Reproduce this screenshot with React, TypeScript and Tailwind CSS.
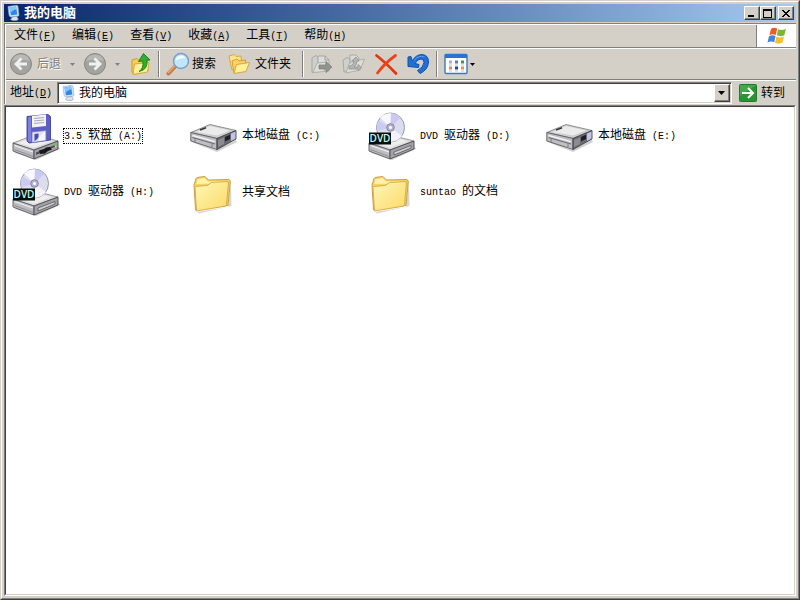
import { useState } from "react";
import type { ReactNode } from "react";

type IconKind = "floppy" | "disk" | "dvd" | "folder";

const menus = [
  { text: "文件", accessKey: "F" },
  { text: "编辑", accessKey: "E" },
  { text: "查看", accessKey: "V" },
  { text: "收藏", accessKey: "A" },
  { text: "工具", accessKey: "T" },
  { text: "帮助", accessKey: "H" },
];

const items: { name: string; icon: IconKind }[] = [
  { name: "3.5 软盘 (A:)", icon: "floppy" },
  { name: "本地磁盘 (C:)", icon: "disk" },
  { name: "DVD 驱动器 (D:)", icon: "dvd" },
  { name: "本地磁盘 (E:)", icon: "disk" },
  { name: "DVD 驱动器 (H:)", icon: "dvd" },
  { name: "共享文档", icon: "folder" },
  { name: "suntao 的文档", icon: "folder" },
];

// Latin runs use a half-width face, Chinese runs the full-width one
function Mixed({ text }: { text: string }) {
  const parts = text.split(/([\u4e00-\u9fff]+)/).filter(Boolean);
  return (
    <>
      {parts.map((part, i) =>
        /[\u4e00-\u9fff]/.test(part) ? (
          <span key={i}>{part}</span>
        ) : (
          <span key={i} className="font-['Liberation_Mono',monospace] text-[10px]">
            {part}
          </span>
        )
      )}
    </>
  );
}

function AccessKey({ letter }: { letter: string }) {
  return (
    <span className="font-['Liberation_Mono',monospace] text-[10px]">
      (<span className="underline underline-offset-1">{letter}</span>)
    </span>
  );
}

function ComputerIcon() {
  return (
    <svg width="16" height="16" viewBox="0 0 16 16" aria-hidden="true">
      <path d="M2 1.500 L10.500 .3 Q11.500 .3 12 1.500 L13 10 Q13 11 12 11.300 L5 12 Q3.500 12 3 10 Z" fill="#cfe3f6" stroke="#8ba9d0" strokeWidth=".6" />
      <path d="M3.500 2.500 L10 1.500 L11.300 9.500 L5 10.300 Z" fill="#2f86e8" />
      <path d="M3.500 2.500 L10 1.500 L10.400 4.500 Q7 4.500 4.500 8 Z" fill="#7fc6ff" />
      <path d="M6.500 12 L10.500 11.500 L12 13.500 Q13 15 10 15.500 Q6 16 4.500 14.500 Z" fill="#dbe3ee" stroke="#8996ab" strokeWidth=".6" />
    </svg>
  );
}

function WindowsFlag() {
  return (
    <svg width="20" height="20" viewBox="0 0 20 20" aria-hidden="true">
      <path d="M4 3 Q7 .8 10.200 2.800 L8.800 9 Q5.500 7.400 2.400 9.200 Z" fill="#ee5a2a" />
      <path d="M11.200 3.200 Q14.500 5 19 2.800 L17.300 9.200 Q13.500 11 9.800 9.300 Z" fill="#7cb82f" />
      <path d="M2 10.300 Q5.500 8.500 8.600 10.100 L7.200 16.200 Q4 14.600 .5 16.400 Z" fill="#3f86dc" />
      <path d="M9.500 10.500 Q13 12.300 17 10.400 L15.500 16.600 Q12 18.800 8 16.700 Z" fill="#f8bf2c" />
    </svg>
  );
}

function RoundArrow({ flip }: { flip?: boolean }) {
  return (
    <svg width="24" height="24" viewBox="0 0 24 24" className={flip ? "-scale-x-100" : ""} aria-hidden="true">
      <circle cx="12" cy="12" r="10.500" fill="#a3a3a1" stroke="#868684" />
      <path d="M3 9 A9.500 9.500 0 0 1 21 9 Q12 6 3 9 Z" fill="#b8b8b6" />
      <path d="M12.500 6.500 L7 12 L12.500 17.500 M7.500 12 H18" fill="none" stroke="#f0f0ee" strokeWidth="2.800" />
    </svg>
  );
}

function UpFolderIcon() {
  return (
    <svg width="22" height="24" viewBox="0 0 22 24" aria-hidden="true">
      <path d="M2 8 L7 6.500 L9 8.500 L17 8 L18 19 L4 22.500 L2 20 Z" fill="#f3cf55" stroke="#d19a26" />
      <path d="M4.500 12 L19 10.500 L17.500 20 L3 22.500 Z" fill="#fff09a" stroke="#dcaa34" />
      <path d="M9 19.500 Q14 16.500 12.800 9 L8.500 9.500 L13.500 1.500 L20 8 L16.800 8.300 Q18.500 17.500 9 19.500 Z" fill="#2fae2f" stroke="#137a18" strokeWidth=".9" />
    </svg>
  );
}

function SearchIcon() {
  return (
    <svg width="24" height="24" viewBox="0 0 24 24" aria-hidden="true">
      <path d="M9.500 14 L2.500 21.500" stroke="#c07a45" strokeWidth="4" strokeLinecap="round" />
      <path d="M9 13.500 L2.500 20.500" stroke="#efa96b" strokeWidth="1.600" strokeLinecap="round" />
      <circle cx="15" cy="9" r="7.500" fill="#bfe6fb" stroke="#7a9ecb" strokeWidth="1.500" />
      <path d="M9.500 9 Q10 4 15.500 3.500 Q19 4 19 6 Q13 6 9.500 9 Z" fill="#f4fcff" />
    </svg>
  );
}

function FoldersIcon() {
  return (
    <svg width="24" height="24" viewBox="0 0 24 24" aria-hidden="true">
      <path d="M2 4 L7 2.500 L9 4.500 L14 4 L15 14 L5 18 Z" fill="#fde48a" stroke="#dfa43c" />
      <path d="M5 9 L10 7 L12 9 L18.500 8 L19 19 L7 21 Z" fill="#f9d465" stroke="#d79c33" />
      <path d="M9.500 12.500 L22.500 10.500 L19 19.500 L7 21.500 Z" fill="#fff09c" stroke="#dda63a" />
    </svg>
  );
}

function MoveToIcon() {
  return (
    <svg width="24" height="24" viewBox="0 0 24 24" aria-hidden="true">
      <path d="M2 6 L6 3.500 L8 5 L8 20 L2 20.500 Z" fill="#cfcfcc" stroke="#a8a8a5" />
      <path d="M8 4 H15 L19 8 V19 H8 Z" fill="#dcdcda" stroke="#a8a8a5" />
      <path d="M15 4 V8 H19" fill="none" stroke="#a0a09e" />
      <path d="M3 20.500 L7 11 L16 10 L14 19.500 Z" fill="#dededb" stroke="#b0b0ad" />
      <path d="M9 13 H16 V9.500 L22 15 L16 20.500 V17 H9 Z" fill="#92928f" stroke="#7f7f7c" strokeWidth=".7" />
    </svg>
  );
}

function CopyToIcon() {
  return (
    <svg width="24" height="24" viewBox="0 0 24 24" aria-hidden="true">
      <path d="M1 8 L5 5.500 L8 7 V19 L2 20 Z" fill="#cfcfcc" stroke="#a8a8a5" />
      <path d="M8 3 H14 L17 6 V16 H8 Z" fill="#dcdcda" stroke="#a8a8a5" />
      <path d="M10 10 L22.500 7 L18 18 L4 21 L7 12 Z" fill="#dededb" stroke="#b0b0ad" />
      <path d="M7 14 Q11 14 12 9 L9.500 9 L14 5 L17 9 H15 Q15 13 12 15 L16 15 V12.500 L19.500 15.500 L16 18.500 V17 H7 Z" fill="#b4b4b1" stroke="#8c8c89" strokeWidth=".7" />
    </svg>
  );
}

function DeleteIcon() {
  return (
    <svg width="24" height="24" viewBox="0 0 24 24" aria-hidden="true">
      <path d="M2.500 3.500 Q11 10 22 21.500" fill="none" stroke="#e0370f" strokeWidth="2.800" strokeLinecap="round" />
      <path d="M21.500 3.500 Q11 11 3.500 21" fill="none" stroke="#ea441a" strokeWidth="2.800" strokeLinecap="round" />
    </svg>
  );
}

function UndoIcon() {
  return (
    <svg width="24" height="24" viewBox="0 0 24 24" aria-hidden="true">
      <path
        d="M2 5 L5 4.500 L6 9 Q10 2.500 16 2.500 Q22.500 3 22.500 10 Q22 18 14 21.500 L11.500 18.500 Q17.500 15.500 18 10.500 Q18 7 15 7 Q11.500 7 9 11.500 L13 12.500 L12.500 15.500 L2 14.500 Z"
        fill="#1f6fd8"
        stroke="#1450a8"
      />
      <path d="M8 8.500 Q13 2.500 18.500 5" fill="none" stroke="#5aa0ee" />
    </svg>
  );
}

function ViewsIcon() {
  return (
    <svg width="24" height="22" viewBox="0 0 24 22" aria-hidden="true">
      <rect x="1" y="1.500" width="22" height="19" rx="1" fill="#fff" stroke="#3a78c8" strokeWidth="1.400" />
      <path d="M1 1 H23 V5 H1 Z" fill="#2d72d2" />
      <path d="M5 7.500 h3 v3 h-3 Z" fill="#9fb1d3" />
      <path d="M11 7.500 h3 v3 h-3 Z" fill="#4c82cb" />
      <path d="M17 7.500 h3 v3 h-3 Z" fill="#31a13b" />
      <path d="M5 13.500 h3 v3 h-3 Z" fill="#e28a54" />
      <path d="M11 13.500 h3 v3 h-3 Z" fill="#174a9c" />
      <path d="M17 13.500 h3 v3 h-3 Z" fill="#e09a3c" />
      <path d="M5 12 h3 M11 12 h3 M17 12 h3 M5 18 h3 M11 18 h3 M17 18 h3" stroke="#b8c6dc" />
    </svg>
  );
}

function GoIcon() {
  return (
    <svg width="18" height="18" viewBox="0 0 18 18" aria-hidden="true">
      <rect x=".5" y=".5" width="17" height="17" rx="1" fill="#2a9434" stroke="#1f7a2b" />
      <path d="M1 1 H17 L1 12 Z" fill="#45a84d" />
      <path d="M9 4 L14 9 L9 14 M13 9 H3" fill="none" stroke="#fff" strokeWidth="2" />
    </svg>
  );
}

function Caret({ muted }: { muted?: boolean }) {
  return (
    <svg width="5" height="3" viewBox="0 0 5 3" aria-hidden="true">
      <path d="M0 0 H5 L2.500 3 Z" fill={muted ? "#808080" : "#000"} />
    </svg>
  );
}

// Grey case shared by the floppy and the DVD drives
function DriveCase() {
  return (
    <>
      <path d="M2 38 L22 47 L47 35 L48 37 L24 48 L3 41 Z" fill="#b0b0b0" opacity=".6" />
      <path d="M1 31 L22 23 L46 29 L22 38 Z" fill="#dcdcde" stroke="#88888c" strokeWidth=".8" />
      <path d="M6 31 L22 25 L40 29 L22 35.500 Z" fill="#eeeeef" />
      <path d="M1 31 L22 38 V47 L1 39 Z" fill="#bdbdc1" stroke="#5c5c60" strokeWidth=".9" />
      <path d="M22 38 L46 29 V37 L22 47 Z" fill="#a2a2a7" stroke="#48484c" strokeWidth=".9" />
      <path d="M2.500 33.500 L21 40" stroke="#f0f0f2" strokeWidth="1.300" />
      <path d="M2.500 37.500 L21 44.500" stroke="#8e8e93" />
    </>
  );
}

function FloppyDriveIcon() {
  return (
    <svg width="48" height="48" viewBox="0 0 48 48" aria-hidden="true">
      <DriveCase />
      <path d="M25 42 L44 34" stroke="#d8d8dc" strokeWidth="1.500" />
      <path d="M24 40.500 L43 33 V35 L24 43 Z" fill="#4a4a4e" />
      <path d="M27 38.500 L32 37 L34 35.500 L38 35 L40 37.500 L36 39 L33 41.500 L28 42 Z" fill="#18181a" />
      <circle cx="43" cy="32.500" r="1.200" fill="#6acb4a" />
      <path d="M15 4.500 L36 2.500 L38.500 4.500 V28 L17 31 L15 29 Z" fill="#5c60c6" stroke="#3e429a" strokeWidth=".9" />
      <path d="M16 5.500 L19 5 V29.500 L17 30 L16 29 Z" fill="#7d81dc" />
      <path d="M20 4 L34 2.600 V14 L20 15.500 Z" fill="#f3f3f7" />
      <path d="M22 6.500 L32 5.500 M22 9 L32 8 M22 11.500 L32 10.500" stroke="#a5a5b6" />
      <path d="M20 20 L34 18.500 V28.500 L20 30.500 Z" fill="#dfe1f5" stroke="#7378c5" strokeWidth=".7" />
      <path d="M22.500 22 L26.500 21.500 V28.500 L22.500 29 Z" fill="#484da8" />
      <path d="M22.500 29.500 L33 19 V28 Z" fill="#fff" opacity=".75" />
    </svg>
  );
}

function HardDiskIcon() {
  return (
    <svg width="48" height="48" viewBox="0 0 48 48" aria-hidden="true">
      <path d="M2 29 L26 38 L46 28 L47 30 L27 40 L4 31 Z" fill="#b0b0b0" opacity=".6" />
      <path d="M.8 20.500 L20 12.500 L46 18.500 L27 26.500 Z" fill="#cdcdcf" stroke="#7b7b7e" strokeWidth=".8" />
      <path d="M6 20 L20 14 L40 18.500 L27 23.500 Z" fill="#ebebec" />
      <path d="M.8 20.500 L27 26.500 V37.500 L.8 29 Z" fill="#bfbfc3" stroke="#5b5b5f" strokeWidth=".9" />
      <path d="M27 26.500 L46 18.500 V27 L27 37.500 Z" fill="#6a6a70" stroke="#414146" strokeWidth=".9" />
      <path d="M2.500 25.500 L25 32" stroke="#6f6f74" strokeWidth="1.300" />
      <path d="M2.500 23.500 L25 29.700" stroke="#f5f5f6" strokeWidth="1.300" />
      <path d="M5 26 V30 M22 31 V35" stroke="#7c7c80" />
      <path d="M28 28 L34 25.500 V32 L28 35 Z" fill="#8b8b90" />
      <path d="M35 25 L40 22.800 V27 L35 29.500 Z" fill="#1e1e28" />
      <path d="M41 21.500 L45.500 19.500 V26.500 L41 29 Z" fill="#c3c3ea" />
      <path d="M10 18 L16 15.800" stroke="#333" strokeWidth="1.600" />
    </svg>
  );
}

function DvdDriveIcon() {
  return (
    <svg width="48" height="48" viewBox="0 0 48 48" aria-hidden="true">
      <DriveCase />
      <path d="M26 40 L43 33.500 V36 L26 43 Z" fill="#d2d2d6" stroke="#56565a" strokeWidth=".8" />
      <ellipse cx="22.500" cy="15.500" rx="14" ry="14.500" fill="#dcdcef" stroke="#8e8ea8" strokeWidth=".9" />
      <path d="M22.500 15.500 L12 5.500 Q17 1 23 1.300 Z" fill="#f8f8ff" />
      <path d="M22.500 15.500 L23 1.300 Q29 1.500 32.500 5.500 Z" fill="#c9c8ee" />
      <path d="M22.500 15.500 L9.500 19 Q8 13 10 8.500 Z" fill="#cbcaf0" />
      <path d="M22.500 15.500 L34 24 Q29 30 23 29.700 Z" fill="#f4f3fb" />
      <circle cx="22.500" cy="15.500" r="3.800" fill="#b5b2cf" stroke="#8582a8" />
      <circle cx="22.500" cy="15.500" r="1.500" fill="#fff" />
      <rect x="1" y="20.500" width="22" height="12" fill="#04100f" />
      <text x="12" y="30" textAnchor="middle" fill="#c9f7f5" fontSize="10" fontWeight="600" fontFamily="Open Sans, sans-serif">
        DVD
      </text>
    </svg>
  );
}

function FolderIcon() {
  return (
    <svg width="48" height="48" viewBox="0 0 48 48" aria-hidden="true">
      <path d="M7 44 L38 39 L41 15 L41.500 38 L9 45.500 Z" fill="#bbb" opacity=".6" />
      <path d="M5.500 42 L4 17 L6 10.500 Q6.500 9.500 8 9.300 L15 8.500 L18.500 12 L38 11.500 Q40.500 11.500 40.300 14 L38 37.500 Z" fill="#f4d468" stroke="#c4973a" strokeWidth=".9" />
      <path d="M6.500 16 L7.500 11.300 L14.500 10 L18 13.500 L37 13 L38 15 Z" fill="#fff3ae" />
      <path d="M5 19.500 Q5 18.500 7 18.300 L17 17.500 L21.500 14.500 L37 13.500 Q38.500 13.500 38.500 15 L36.500 36.500 Q36.300 37.800 35 38.200 L6.500 43 Z" fill="url(#folderFront)" stroke="#d3a843" strokeWidth=".9" />
      <defs>
        <linearGradient id="folderFront" x1="0" y1="0" x2="1" y2="1">
          <stop offset="0" stopColor="#fff7ba" />
          <stop offset="1" stopColor="#fcd964" />
        </linearGradient>
      </defs>
    </svg>
  );
}

function ItemIcon({ kind }: { kind: IconKind }) {
  if (kind === "floppy") return <FloppyDriveIcon />;
  if (kind === "disk") return <HardDiskIcon />;
  if (kind === "dvd") return <DvdDriveIcon />;
  return <FolderIcon />;
}

const raised =
  "flex items-center justify-center bg-[#d4d0c8] border border-t-white border-l-white border-r-[#404040] border-b-[#404040] shadow-[inset_-1px_-1px_0_#808080]";

function CaptionButton({ label, children }: { label: string; children: ReactNode }) {
  return (
    <button type="button" aria-label={label} className={`${raised} w-4 h-[14px]`}>
      <svg width="10" height="9" viewBox="0 0 10 9" aria-hidden="true" shapeRendering="crispEdges">
        {children}
      </svg>
    </button>
  );
}

function ToolButton({ label, children, className = "" }: { label: string; children: ReactNode; className?: string }) {
  return (
    <button type="button" aria-label={label} className={`flex items-center shrink-0 ${className}`}>
      {children}
    </button>
  );
}

function Separator() {
  return <div className="w-[2px] h-[26px] shrink-0 border-l border-l-[#808080] border-r border-r-white" />;
}

export default function App() {
  const [address, setAddress] = useState("我的电脑");
  const [selected, setSelected] = useState("3.5 软盘 (A:)");

  return (
    <div className="min-h-screen flex flex-col bg-[#d4d0c8] border border-t-[#d4d0c8] border-l-[#d4d0c8] border-r-[#404040] border-b-[#404040] font-['Liberation_Sans','Noto_Sans_CJK_SC',sans-serif] text-[12px] leading-4 text-black">
      <div className="grow flex flex-col p-[2px] border border-t-white border-l-white border-r-[#808080] border-b-[#808080]">
        <header className="h-[18px] flex items-center pl-[2px] pr-[2px] bg-linear-to-r from-[#0a246a] to-[#a6caf0]">
          <ComputerIcon />
          <h1 className="ml-[2px] grow text-[13px] font-bold text-white">我的电脑</h1>
          <CaptionButton label="最小化">
            <path d="M1 6 h6 v2 h-6 Z" />
          </CaptionButton>
          <CaptionButton label="最大化">
            <path d="M0 0 h9 v9 h-9 Z M1 2 v6 h7 v-6 Z" fillRule="evenodd" />
          </CaptionButton>
          <div className="w-[2px]" />
          <CaptionButton label="关闭">
            <path d="M1 1h2v1h1v1h2v-1h1v-1h2v1h-1v1h-1v1h-1v1h1v1h1v1h1v1h-2v-1h-1v-1h-2v1h-1v1h-2v-1h1v-1h1v-1h1v-1h-1v-1h-1v-1h-1Z" />
          </CaptionButton>
        </header>

        <div className="mt-px border-t border-l border-[#808080]">
          <div className="border-l border-t border-white">
            <nav className="h-[23px] flex items-stretch border-b border-b-[#808080]">
              <div className="flex items-center grow pl-2 gap-4">
                {menus.map((menu) => (
                  <button key={menu.accessKey} type="button" className="whitespace-nowrap">
                    {menu.text}
                    <AccessKey letter={menu.accessKey} />
                  </button>
                ))}
              </div>
              <div className="w-10 flex items-center justify-center bg-white border-l border-l-[#808080]">
                <WindowsFlag />
              </div>
            </nav>

            <div className="h-8 flex items-center pl-[3px] border-t border-t-white border-b border-b-[#808080]">
              <ToolButton label="后退" className="text-[#808080] w-[60px] gap-1">
                <RoundArrow />
                <span className="whitespace-nowrap [text-shadow:1px_1px_0_#fff]">后退</span>
              </ToolButton>
              <ToolButton label="后退列表" className="px-[1px]">
                <Caret muted />
              </ToolButton>
              <ToolButton label="前进" className="ml-[7px]">
                <RoundArrow flip />
              </ToolButton>
              <ToolButton label="前进列表" className="ml-2">
                <Caret muted />
              </ToolButton>
              <ToolButton label="向上" className="ml-[10px] mr-[6px]">
                <UpFolderIcon />
              </ToolButton>
              <Separator />
              <ToolButton label="搜索" className="ml-[6px] gap-[2px]">
                <SearchIcon />
                <span className="whitespace-nowrap">搜索</span>
              </ToolButton>
              <ToolButton label="文件夹" className="ml-[11px] mr-[11px] gap-1">
                <FoldersIcon />
                <span className="whitespace-nowrap">文件夹</span>
              </ToolButton>
              <Separator />
              <div className="flex items-center gap-2 ml-[6px] mr-[6px]">
                <ToolButton label="移至">
                  <MoveToIcon />
                </ToolButton>
                <ToolButton label="复制到">
                  <CopyToIcon />
                </ToolButton>
                <ToolButton label="删除">
                  <DeleteIcon />
                </ToolButton>
                <ToolButton label="撤消">
                  <UndoIcon />
                </ToolButton>
              </div>
              <Separator />
              <ToolButton label="查看" className="ml-[6px] gap-[2px]">
                <ViewsIcon />
                <Caret />
              </ToolButton>
            </div>

            <form className="h-6 flex items-center pl-1 border-t border-t-white" onSubmit={(e) => e.preventDefault()}>
              <label htmlFor="address" className="whitespace-nowrap">
                地址
                <AccessKey letter="D" />
              </label>
              <div className="ml-[5px] grow h-[22px] flex items-center bg-white border border-t-[#808080] border-l-[#808080] border-r-white border-b-white shadow-[inset_1px_1px_0_#404040,inset_-1px_-1px_0_#d4d0c8] pl-[3px] pr-[1px]">
                <ComputerIcon />
                <input
                  id="address"
                  type="text"
                  value={address}
                  onChange={(e) => setAddress(e.target.value)}
                  className="ml-[2px] grow min-w-0 h-4 bg-transparent outline-none"
                />
                <button type="button" aria-label="地址列表" className={`${raised} w-4 h-[18px]`}>
                  <svg width="7" height="4" viewBox="0 0 7 4" aria-hidden="true">
                    <path d="M0 0 H7 L3.500 4 Z" />
                  </svg>
                </button>
              </div>
              <button type="submit" className="flex items-center gap-1 pl-[7px] pr-[11px] whitespace-nowrap">
                <GoIcon />
                转到
              </button>
            </form>
          </div>
        </div>

        <main className="mt-px grow flex border border-t-[#808080] border-l-[#808080] border-r-white border-b-white">
          <div className="grow border border-t-[#404040] border-l-[#404040] border-r-[#d4d0c8] border-b-[#d4d0c8] bg-white pl-[6px] pt-[5px]">
            <ul className="flex flex-wrap gap-y-2">
              {items.map((item) => (
                <li key={item.name} className="w-[178px]">
                  <button type="button" className="flex items-center gap-[3px]" onClick={() => setSelected(item.name)}>
                    <ItemIcon kind={item.icon} />
                    <span
                      className={`leading-3 whitespace-pre border border-dotted ${
                        selected === item.name ? "border-black" : "border-transparent"
                      }`}
                    >
                      <Mixed text={item.name} />
                    </span>
                  </button>
                </li>
              ))}
            </ul>
          </div>
        </main>
      </div>
    </div>
  );
}
